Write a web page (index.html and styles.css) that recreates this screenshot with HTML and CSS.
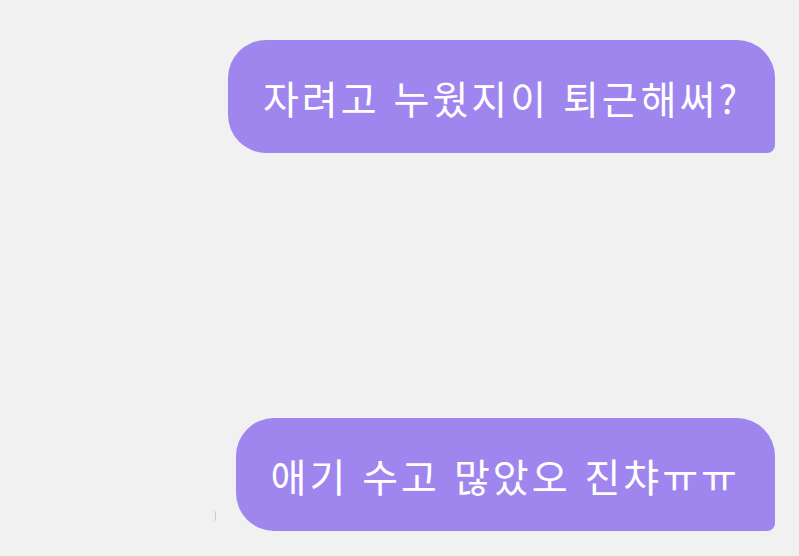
FILE: index.html
```html
<!DOCTYPE html>
<html lang="ko">
<head>
    <meta charset="UTF-8">
    <meta name="viewport" content="width=device-width, initial-scale=1.0">
    <title>Chat</title>
    <link rel="stylesheet" href="styles.css">
</head>
<body>
    <div class="chat">
        <div class="bubble first">자려고 누웠지이 퇴근해써?</div>
        <div class="row">
            <span class="mark"></span>
            <div class="bubble second">애기 수고 많았오 진챠ㅠㅠ</div>
        </div>
    </div>
</body>
</html>
```

FILE: styles.css
```css
/* General */
body {
    margin: 0;
    padding: 0;
    background: #f1f1f1;
    font-family: "Noto Sans CJK KR", "Noto Sans", sans-serif;
}

.chat {
    height: 556px;
    box-sizing: border-box;
    padding: 40px 24px 25px 0;
    display: flex;
    flex-direction: column;
    align-items: flex-end;
    justify-content: space-between;
}

/* Bubbles */
.bubble {
    background: #9f86ef;
    color: white;
    font-size: 39px;
    font-weight: 400;
    letter-spacing: 3px;
    height: 113px;
    box-sizing: border-box;
    display: flex;
    align-items: center;
    padding: 0 35px 0 35px;
    border-radius: 38px 38px 8px 38px;
    white-space: nowrap;
}

.row {
    display: flex;
    align-items: flex-end;
    gap: 20px;
}

.mark {
    width: 3px;
    height: 12px;
    margin-bottom: 9px;
    border-right: 1px solid #c8c8c8;
    border-radius: 0 6px 6px 0;
}
```
